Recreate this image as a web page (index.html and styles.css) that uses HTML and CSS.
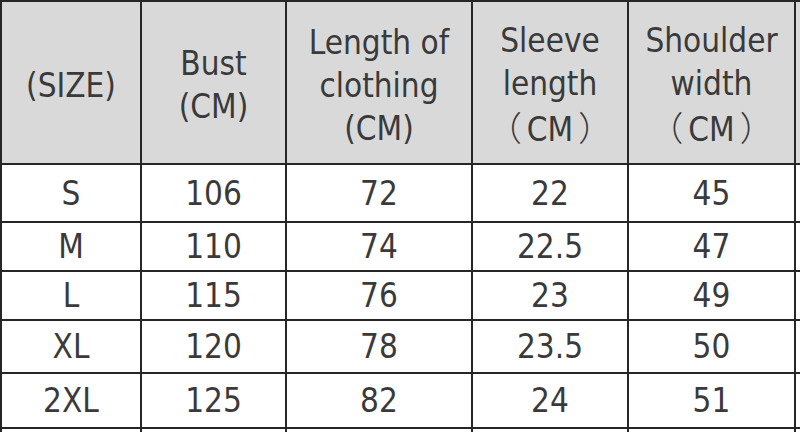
FILE: index.html
```html
<!DOCTYPE html>
<html>
<head>
<meta charset="utf-8">
<link rel="stylesheet" href="styles.css">
</head>
<body>
<div class="chart">
  <div class="cell head"><div>(SIZE)</div></div>
  <div class="cell head"><div>Bust<br>(CM)</div></div>
  <div class="cell head"><div>Length of<br>clothing<br>(CM)</div></div>
  <div class="cell head"><div>Sleeve<br>length<br><span class="fw lp">（</span>CM<span class="fw rp">）</span></div></div>
  <div class="cell head"><div>Shoulder<br>width<br><span class="fw lp">（</span>CM<span class="fw rp">）</span></div></div>
  <div class="cell head"></div>

  <div class="cell">S</div><div class="cell">106</div><div class="cell">72</div><div class="cell">22</div><div class="cell">45</div><div class="cell"></div>
  <div class="cell">M</div><div class="cell">110</div><div class="cell">74</div><div class="cell">22.5</div><div class="cell">47</div><div class="cell"></div>
  <div class="cell">L</div><div class="cell">115</div><div class="cell">76</div><div class="cell">23</div><div class="cell">49</div><div class="cell"></div>
  <div class="cell">XL</div><div class="cell">120</div><div class="cell">78</div><div class="cell">23.5</div><div class="cell">50</div><div class="cell"></div>
  <div class="cell">2XL</div><div class="cell">125</div><div class="cell">82</div><div class="cell">24</div><div class="cell">51</div><div class="cell"></div>
  <div class="cell"></div><div class="cell"></div><div class="cell"></div><div class="cell"></div><div class="cell"></div><div class="cell"></div>
</div>
</body>
</html>
```
FILE: styles.css
```css
html, body {
  margin: 0;
  padding: 0;
  width: 800px;
  height: 432px;
  overflow: hidden;
  background: #ffffff;
}
.chart {
  display: grid;
  grid-template-columns: 138px 143px 184px 154px 165px 4px;
  grid-template-rows: 161px 56px 47px 47px 51px 53px 3px;
  gap: 2px;
  padding: 2px 0 0 2px;
  background: #262626;
  width: max-content;
  font-family: "DejaVu Sans Condensed", "DejaVu Sans", "Noto Sans CJK SC", sans-serif;
  font-size: 33px;
  color: #3a3a3a;
}
.cell {
  background: #ffffff;
  display: flex;
  align-items: center;
  justify-content: center;
  text-align: center;
  line-height: 43px;
  overflow: hidden;
  white-space: nowrap;
}
.head {
  background: #d9d9d9;
  padding-top: 5px;
  box-sizing: border-box;
}
.fw {
  font-family: "Noto Sans CJK SC", sans-serif;
  font-size: 34px;
  font-weight: 300;
}
.lp {
  margin-right: 5px;
}
.rp {
  margin-left: 5px;
}
```
